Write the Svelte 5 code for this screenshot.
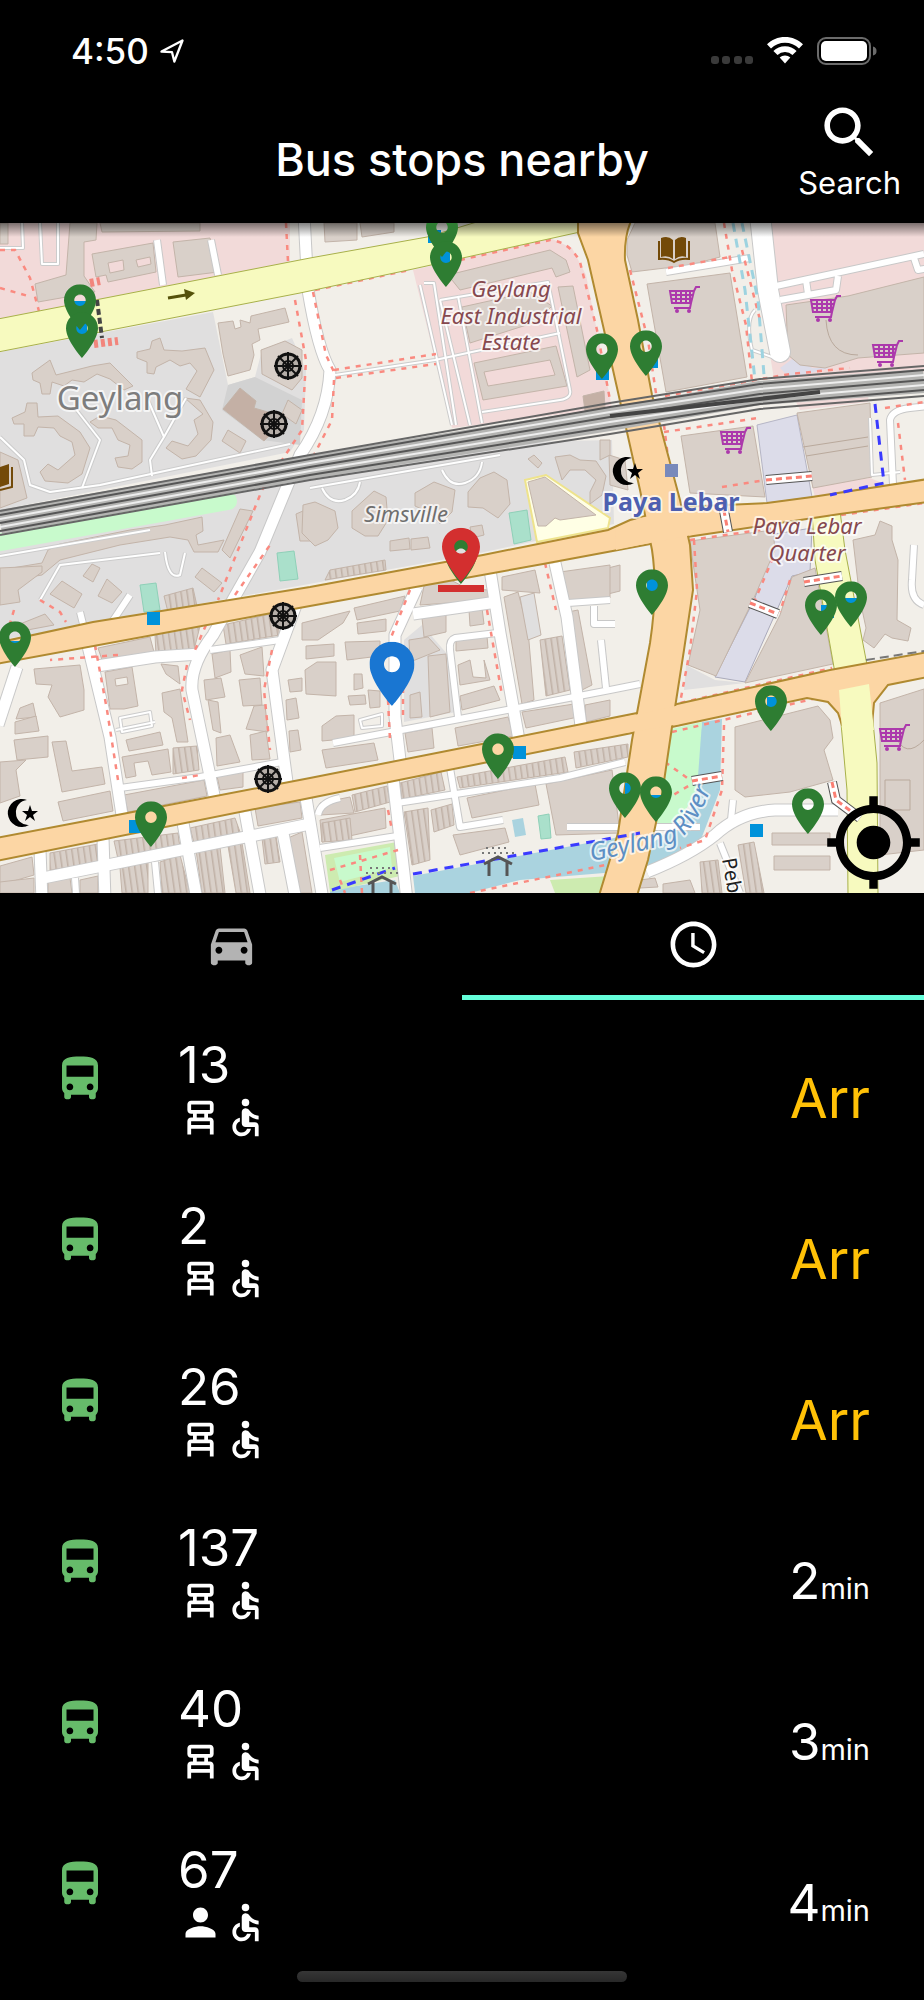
<script lang="ts">
  type Load = "seats" | "standing";

  interface Arrival {
    service: string;
    minutes: number;
    load: Load;
  }

  interface Pin {
    x: number;
    y: number;
    kind: "stop" | "selected" | "here";
  }

  const arrivals: Arrival[] = [
    { service: "13", minutes: 0, load: "seats" },
    { service: "2", minutes: 0, load: "seats" },
    { service: "26", minutes: 0, load: "seats" },
    { service: "137", minutes: 2, load: "seats" },
    { service: "40", minutes: 3, load: "seats" },
    { service: "67", minutes: 4, load: "standing" }
  ];

  // map canvas, in map units
  const MAP_W = 924;
  const MAP_H = 670;
  const MAP_TOP = 223;

  // x, y is the tip of the pin
  const pins: Pin[] = [
    { x: 442, y: 257, kind: "stop" },
    { x: 446, y: 287, kind: "stop" },
    { x: 80, y: 330, kind: "stop" },
    { x: 82, y: 358, kind: "stop" },
    { x: 602, y: 379, kind: "stop" },
    { x: 646, y: 376, kind: "stop" },
    { x: 652, y: 615, kind: "stop" },
    { x: 821, y: 635, kind: "stop" },
    { x: 851, y: 627, kind: "stop" },
    { x: 15, y: 667, kind: "stop" },
    { x: 771, y: 731, kind: "stop" },
    { x: 498, y: 779, kind: "stop" },
    { x: 625, y: 818, kind: "stop" },
    { x: 656, y: 822, kind: "stop" },
    { x: 808, y: 834, kind: "stop" },
    { x: 151, y: 847, kind: "stop" },
    { x: 461, y: 584, kind: "stop" },
    { x: 461, y: 582, kind: "selected" },
    { x: 392, y: 706, kind: "here" }
  ];

  const busSquares = [
    [428, 230], [437, 251], [74, 301], [74, 322], [596, 367], [645, 355],
    [147, 612], [129, 820], [513, 746], [750, 824], [9, 641], [647, 579],
    [821, 605], [845, 598], [767, 697], [625, 783], [650, 795]
  ];

  const buildings = [
    // north west
    "0,223 8,223 8,244 0,244",
    "70,223 97,223 96,240 84,242 84,276 95,292 38,302 35,284 66,275",
    "100,223 200,223 200,231 102,232",
    "92,254 153,243 156,272 108,282 106,275 96,277",
    "173,242 210,238 218,272 178,277",
    "324,223 357,223 357,240 325,242",
    "360,223 394,223 394,232 362,237",
    "32,373 50,360 56,375 92,366 110,363 133,386 124,390 110,379 97,374 84,382 72,380 64,386 52,382 50,394 42,394 40,383 33,380",
    "137,352 150,349 152,341 160,338 164,350 182,351 205,348 214,370 200,397 186,389 197,371 190,363 180,366 170,360 156,367 154,374 147,373 147,362 137,358",
    "12,418 25,412 27,403 37,403 38,417 58,416 80,432 90,448 82,474 68,483 45,481 40,472 48,464 58,470 75,455 72,442 60,436 54,428 38,427 34,436 24,436 24,424 14,424",
    "90,422 100,416 116,420 142,440 142,462 132,469 118,467 115,458 128,456 130,445 118,440 112,428 98,428",
    "185,398 200,400 213,422 211,440 196,456 182,459 166,448 172,441 188,446 198,434 194,420 203,414",
    "228,430 246,441 240,453 222,441",
    "218,323 233,321 235,329 241,327 240,320 250,323 251,316 285,308 289,322 258,329 260,340 252,344 254,355 250,370 228,376 223,354",
    "261,350 285,341 302,350 302,378 292,390 262,374",
    "288,400 302,410 296,424 282,414",
    "0,452 18,460 27,498 0,508",
    // estates along the railway
    "48,550 60,544 130,530 165,525 202,517 203,531 196,535 198,545 224,540 218,552 194,552 188,540 170,537 120,545 60,560 42,575 0,582 0,570 42,563",
    "240,509 253,511 230,558 222,550",
    "0,568 42,566 42,572 18,590 20,602 0,605",
    "92,564 100,568 93,582 83,576",
    "62,581 82,594 74,608 50,594",
    "107,579 122,592 112,603 98,596",
    "202,568 222,583 214,592 195,577",
    "20,624 45,614 54,625 22,631",
    "296,514 310,508 310,541 300,541",
    "303,505 315,502 335,511 338,528 328,540 315,546 302,533",
    "352,511 374,491 386,497 388,520 378,536 365,536 352,528",
    "415,493 434,482 455,490 452,512 440,524 428,512 415,506",
    "468,492 480,478 494,472 507,480 510,504 498,518 483,508 468,507",
    "390,541 409,538 410,549 390,551",
    "411,539 428,537 430,548 411,550",
    "470,527 482,525 484,535 472,538",
    "528,459 534,455 542,463 538,468",
    "555,457 570,455 580,460 596,461 606,476 602,495 590,504 590,492 596,480 585,470 570,470 562,480",
    "528,482 545,477 596,515 560,520 555,518 546,526 538,526",
    // industrial estate
    "448,275 550,250 566,260 570,272 556,277 552,268 460,290",
    "462,307 530,292 552,306 536,322 470,343",
    "474,363 556,346 567,386 483,400",
    "558,287 573,286 590,370 577,377",
    // east of the main road
    "635,223 715,223 720,257 690,265 632,272 627,255 627,240",
    "647,284 730,273 747,377 666,392",
    "786,305 848,296 924,277 924,353 858,358 825,368 800,365 788,355",
    "681,436 753,426 765,497 690,493",
    "797,413 870,403 872,477 813,488",
    "690,541 773,530 775,550 753,600 716,676 688,665 700,610 694,570",
    "792,577 815,568 833,664 745,683 780,615",
    "853,540 875,535 880,521 892,526 892,540 898,560 897,620 911,628 908,641 892,638 885,634 874,648 863,640 866,628 860,600",
    "735,727 818,706 830,720 833,738 824,750 833,780 790,792 745,797 735,790",
    "880,703 924,689 924,850 880,855",
    "609,455 625,460 628,490 610,485",
    "610,455 600,460 600,440 610,440",
    "600,570 620,565 620,591 600,596",
    // blocks between the avenues
    "98,648 150,637 154,652 102,660",
    "34,669 80,665 84,690 84,710 60,717 48,697 52,685 36,684",
    "20,708 33,703 36,717 16,719",
    "15,722 36,716 39,731 15,734",
    "14,740 48,736 48,757 17,760",
    "52,742 66,741 72,771 102,767 105,784 62,792",
    "0,762 26,760 16,770 20,796 0,803",
    "58,802 110,791 113,811 63,821",
    "105,672 132,667 138,706 124,709 110,709",
    "126,740 160,732 163,745 129,751",
    "122,757 168,749 171,772 152,775 148,761 134,763 136,776 126,778",
    "124,795 204,780 207,796 128,812",
    "161,664 178,666 180,684 166,674",
    "162,693 180,689 184,716 188,742 177,742 172,718 164,712",
    "212,654 230,650 231,672 215,678",
    "204,680 221,678 225,697 206,700",
    "208,700 218,702 221,733 213,730",
    "216,738 230,735 240,762 217,766",
    "240,655 262,647 264,676 245,674",
    "239,680 260,678 262,705 243,706",
    "254,706 265,705 268,732 246,729",
    "250,735 266,731 270,759 252,760",
    "217,776 243,770 243,787 220,790",
    "286,700 296,698 299,718 287,720",
    "289,731 298,730 301,750 290,752",
    "288,680 302,678 302,691 290,692",
    "302,623 350,611 343,623 318,640 302,640",
    "354,608 405,596 400,611 357,620",
    "357,623 386,619 386,631 358,634",
    "345,642 380,641 380,656 347,660",
    "306,646 334,644 334,656 306,659",
    "305,670 317,662 336,662 336,696 306,694",
    "322,726 336,716 354,715 354,738 322,741",
    "354,674 362,674 363,688 354,690",
    "348,696 365,695 366,704 350,705",
    "368,690 380,691 380,707 370,708",
    "322,750 374,743 378,760 326,768",
    "424,586 445,577 468,589 490,590 490,600 420,605",
    "422,618 446,615 446,632 424,637",
    "409,640 428,637 440,650 410,662",
    "410,695 420,692 422,717 410,718",
    "428,656 446,654 450,712 430,717",
    "469,610 482,608 484,624 470,626",
    "456,640 487,636 488,648 456,651",
    "458,665 470,660 473,677 486,678 484,660 490,680 460,685",
    "460,696 494,686 500,700 462,710",
    "405,733 432,728 434,748 408,752",
    "455,728 508,717 514,736 458,746",
    "502,577 535,570 540,593 502,590",
    "504,597 518,592 528,630 534,700 522,704",
    "560,572 610,565 610,598 564,602",
    "568,612 578,610 592,685 582,690",
    "522,712 574,704 578,717 526,728",
    "585,705 610,700 610,716 586,722",
    // south of the lower avenue
    "0,866 32,857 34,875 0,885",
    "0,882 34,878 34,893 0,893",
    "48,882 70,878 72,893 48,893",
    "80,880 98,876 98,893 80,893",
    "255,808 300,802 302,818 258,826",
    "320,803 350,797 354,813 320,815",
    "320,820 385,808 386,828 322,842",
    "288,838 302,832 312,893 298,893",
    "467,798 535,784 539,805 472,818",
    "546,784 612,770 620,833 556,835",
    "453,835 505,828 509,842 460,855",
    "772,833 830,833 830,845 772,845",
    "774,856 830,856 830,870 774,870",
    "640,880 655,878 658,887 640,888",
    "663,884 690,880 695,893 663,893"
  ];

  // shophouse rows, drawn with party walls
  const terraces = [
    "164,596 193,588 197,606 168,612",
    "155,634 200,626 194,650 156,656",
    "223,625 275,613 280,635 226,644",
    "173,748 197,746 199,770 173,774",
    "330,570 385,560 386,570 325,580",
    "540,640 562,636 570,690 546,696",
    "190,828 235,818 240,832 194,843",
    "114,841 178,833 180,848 118,859",
    "50,853 98,844 98,863 50,870",
    "196,850 220,847 225,893 202,893",
    "228,846 242,843 250,893 236,893",
    "262,838 276,836 280,862 265,864",
    "120,868 148,862 148,893 122,893",
    "160,862 180,855 190,893 162,893",
    "352,795 387,786 390,802 355,812",
    "322,823 350,818 352,840 322,842",
    "400,783 441,772 445,790 402,799",
    "404,812 428,808 430,860 412,865",
    "431,810 452,804 454,825 434,832",
    "457,777 565,757 568,772 460,788",
    "574,752 628,744 628,757 576,768",
    "738,845 754,842 764,893 746,893",
    "700,862 718,860 722,893 702,893"
  ];

  const majorStreets = [
    "M304 215 L308 290 Q318 350 330 370 Q328 415 300 455 L260 552 L213 635 Q190 665 192 690 L215 800",
    "M17 667 L-2 725",
    "M87 642 L110 737 L122 815",
    "M97 666 L155 657 L200 654",
    "M296 605 L272 670 L287 782",
    "M417 587 L395 635 L395 717 L400 760",
    "M490 570 L500 633 L519 740",
    "M555 563 L567 617 L581 726",
    "M40 850 L42 900 M103 838 L105 900 M183 823 L197 900 M245 812 L261 900 M282 828 L296 900",
    "M393 778 L407 900 M306 798 L323 900",
    "M43 878 L310 824",
    "M647 872 Q690 855 715 835 Q740 812 775 810 L838 810",
    "M413 614 L497 602"
  ];

  const minorStreets = [
    "M210 650 L280 640",
    "M120 788 L200 777 L282 762",
    "M333 743 L507 710 L610 690 L640 684",
    "M497 633 L455 638 Q449 640 450 650 L458 717",
    "M450 768 L460 827 L503 820",
    "M397 803 L560 778 L625 762",
    "M320 848 L397 836",
    "M318 815 Q320 802 340 798",
    "M80 612 L84 628 M130 595 L112 622",
    "M155 862 L158 893 M75 878 L76 893",
    "M568 603 L610 600 M594 606 L594 624 L615 624",
    "M601 640 L606 688",
    "M567 827 L700 827",
    "M720 843 L740 893 M733 800 L731 820",
    "M666 272 L750 258",
    "M776 286 L924 254 M780 300 L836 290 L838 276 M806 280 L808 294",
    "M914 258 L918 270 L930 268",
    "M157 240 L163 285 M211 240 L218 275",
    "M893 485 L890 420 Q892 410 910 408 L930 406",
    "M914 545 L912 580 Q910 600 924 605"
  ];

  const paths = [
    "M40 223 L42 264 L58 264 L58 223 M22 223 L23 248 L0 248",
    "M424 283 L434 283 L456 425 M420 285 L452 425 M440 300 L470 425 M458 296 L482 423",
    "M335 375 L435 360 L560 333 M440 300 L548 282 L570 390 Q572 398 560 400 L482 412",
    "M75 408 L100 440 L82 488 M148 400 L164 437 L150 460 L152 476 M164 437 L186 398",
    "M0 437 L24 460 L30 485 L50 492 L100 485 L290 444",
    "M310 488 L500 455 M322 488 Q330 505 345 500 Q358 495 360 482 M442 470 Q450 488 465 483 Q480 478 482 462",
    "M0 556 L150 530 M40 600 L60 565 L160 553 M165 552 Q168 580 180 575 L185 553",
    "M155 722 L116 730 M120 718 L150 712 L152 726 L122 732 Z",
    "M755 310 Q745 320 752 350 L775 358",
    "M870 418 L872 475 L900 472",
    "M360 720 L382 714 L382 726 L362 728 Z"
  ];

  const footways = [
    "M0 250 L15 250 L30 278 L40 315",
    "M0 288 L28 296",
    "M286 223 L288 262 M295 300 L306 360 L302 430 L262 490 L218 600",
    "M313 292 L326 355 L334 372 M334 380 L332 420 L314 455",
    "M334 370 L436 354 M336 378 L436 364",
    "M315 290 L410 270 M460 260 L550 240 Q570 242 580 262 L597 330 L610 400",
    "M630 270 L648 340 L657 400 M665 396 L790 374 L850 368",
    "M724 223 L732 270 L746 325 L752 382 M742 250 L760 320",
    "M668 268 L730 257",
    "M664 425 L672 490 M664 432 L758 418",
    "M722 487 L765 480",
    "M690 540 L775 528 M841 515 L924 503",
    "M694 540 L697 590 L690 650 L680 703 L832 668",
    "M672 732 L830 695",
    "M773 558 L755 600 M790 580 L780 612",
    "M724 725 L722 790 L705 840 L680 848",
    "M665 762 L690 780 M665 800 L690 785",
    "M118 655 L50 660",
    "M95 645 L107 710 L118 780",
    "M40 600 L60 612 L66 622 M14 610 L8 630",
    "M206 625 L195 650 M187 665 L182 690 L190 720",
    "M272 650 L264 690 L270 750",
    "M410 590 L390 640 M403 655 L403 720 M388 700 L390 740",
    "M487 610 L502 695",
    "M545 563 L556 610",
    "M182 778 L200 775 M250 809 L310 797",
    "M388 810 L392 830 M330 870 L398 850 M340 880 L345 893 M360 855 L362 893",
    "M470 893 L620 862",
    "M235 595 L270 545",
    "M898 423 L905 480 M885 408 L924 402"
  ];

  const footbridges =
    "M750 603 L778 614 M804 582 L842 576 M722 500 L728 532 M832 782 L836 800 L860 818 M692 781 L722 776 M766 480 L812 476";

  const carts = [[670, 287], [811, 296], [873, 341], [721, 428], [880, 725]];
  const wheels = [[288, 366], [274, 424], [283, 616], [268, 779]];
  const mosques = [[612, 457], [7, 799]];

  const tracks = [515, 519, 523, 527, 531];

  const pinNames = { stop: "Bus stop", selected: "Selected bus stop", here: "Your position" };

  let tab = $state("arrivals");
</script>

{#snippet icon(name: string)}
  <svg class="icon" viewBox="0 0 24 24" aria-hidden="true">
    {#if name === "bus"}
      <path d="M4 16c0 .88.39 1.67 1 2.22V20c0 .55.45 1 1 1h1c.55 0 1-.45 1-1v-1h8v1c0 .55.45 1 1 1h1c.55 0 1-.45 1-1v-1.78c.61-.55 1-1.34 1-2.22V6c0-3.5-3.58-4-8-4s-8 .5-8 4v10zm3.5 1c-.83 0-1.5-.67-1.5-1.5S6.67 14 7.5 14s1.5.67 1.5 1.5S8.33 17 7.5 17zm9 0c-.83 0-1.5-.67-1.5-1.5s.67-1.5 1.5-1.5 1.5.67 1.5 1.5-.67 1.5-1.5 1.5zm1.5-6H6V6h12v5z" />
    {:else if name === "car"}
      <path d="M18.92 6.01C18.72 5.42 18.16 5 17.5 5h-11c-.66 0-1.21.42-1.42 1.01L3 12v8c0 .55.45 1 1 1h1c.55 0 1-.45 1-1v-1h12v1c0 .55.45 1 1 1h1c.55 0 1-.45 1-1v-8l-2.08-5.99zM6.5 16c-.83 0-1.5-.67-1.5-1.5S5.67 13 6.5 13s1.5.67 1.5 1.5S7.33 16 6.5 16zm11 0c-.83 0-1.5-.67-1.5-1.5s.67-1.5 1.5-1.5 1.5.67 1.5 1.5-.67 1.5-1.5 1.5zM5 11l1.5-4.5h11L19 11H5z" />
    {:else if name === "clock"}
      <path d="M11.99 2C6.47 2 2 6.48 2 12s4.47 10 9.99 10C17.52 22 22 17.52 22 12S17.52 2 11.99 2zM12 20c-4.42 0-8-3.58-8-8s3.58-8 8-8 8 3.58 8 8-3.58 8-8 8zm.5-13H11v6l5.25 3.15.75-1.23-4.5-2.67z" />
    {:else if name === "search"}
      <path d="M15.5 14h-.79l-.28-.27C15.41 12.59 16 11.11 16 9.5 16 5.91 13.09 3 9.5 3S3 5.91 3 9.5 5.91 16 9.5 16c1.61 0 3.09-.59 4.23-1.57l.27.28v.79l5 4.99L20.49 19l-4.99-5zm-6 0C7.01 14 5 11.99 5 9.5S7.01 5 9.5 5 14 7.01 14 9.5 11.99 14 9.5 14z" />
    {:else if name === "seats"}
      <path d="M17 10c1.1 0 2-.9 2-2V5c0-1.1-.9-2-2-2H7c-1.1 0-2 .9-2 2v3c0 1.1.9 2 2 2h1v2H7c-1.1 0-2 .9-2 2v7h2v-3h10v3h2v-7c0-1.1-.9-2-2-2h-1v-2h1zM7 8V5h10v3H7zm3 2h4v2h-4v-2zm7 6H7v-2h10v2z" />
    {:else if name === "standing"}
      <path d="M12 12c2.21 0 4-1.79 4-4s-1.79-4-4-4-4 1.79-4 4 1.79 4 4 4zm0 2c-2.67 0-8 1.34-8 4v2h16v-2c0-2.66-5.33-4-8-4z" />
    {:else if name === "wheelchair"}
      <circle cx="12" cy="4" r="2" />
      <path d="M19 13v-2c-1.54.02-3.09-.75-4.07-1.83l-1.29-1.43c-.17-.19-.38-.34-.61-.45-.01 0-.01-.01-.02-.01H13c-.35-.2-.75-.3-1.19-.26C10.76 7.11 10 8.04 10 9.09V15c0 1.1.9 2 2 2h5v5h2v-5.5c0-1.1-.9-2-2-2h-3v-3.45c1.29 1.07 3.25 1.94 5 1.95zm-6.17 5c-.41 1.16-1.52 2-2.83 2-1.66 0-3-1.34-3-3 0-1.31.84-2.41 2-2.83V12.1c-2.28.46-4 2.48-4 4.9 0 2.76 2.24 5 5 5 2.42 0 4.44-1.72 4.9-4h-2.07z" />
    {:else if name === "locate"}
      <path d="M12 8c-2.21 0-4 1.79-4 4s1.79 4 4 4 4-1.79 4-4-1.79-4-4-4zm8.94 3c-.46-4.17-3.77-7.48-7.94-7.94V1h-2v2.06C6.83 3.52 3.52 6.83 3.06 11H1v2h2.06c.46 4.17 3.77 7.48 7.94 7.94V23h2v-2.06c4.17-.46 7.48-3.77 7.94-7.94H23v-2h-2.06zM12 19c-3.87 0-7-3.13-7-7s3.13-7 7-7 7 3.13 7 7-3.13 7-7 7z" />
    {/if}
  </svg>
{/snippet}

<div class="app">
  <div class="status-bar">
    <div class="status-left">
      <span class="time">4:50</span>
      <svg class="arrow" viewBox="0 0 24 24" aria-hidden="true">
        <path d="M21 3 L3 12.500 L12 13 L14 21 Z" />
      </svg>
    </div>
    <div class="status-right">
      <svg class="signal" viewBox="0 0 42 8" aria-hidden="true">
        <rect x="0" y="0" width="8" height="8" rx="3" />
        <rect x="11" y="0" width="8" height="8" rx="3" />
        <rect x="23" y="0" width="8" height="8" rx="3" />
        <rect x="34" y="0" width="8" height="8" rx="3" />
      </svg>
      <svg class="wifi" viewBox="0 0 36 27" aria-hidden="true">
        <path d="M18 0C25 0 31.500 2.700 36 7.300L32 11.400A20 20 0 0 0 4 11.400L0 7.300C4.500 2.700 11 0 18 0Z" />
        <path d="M18 9.300C22.500 9.300 26.500 11 29.600 14L25.500 18.100A10.800 10.800 0 0 0 10.500 18.100L6.400 14C9.500 11 13.500 9.300 18 9.300Z" />
        <path d="M18 18.400C20 18.400 21.900 19.200 23.300 20.500L18 26.500L12.700 20.500C14.100 19.200 16 18.400 18 18.400Z" />
      </svg>
      <svg class="battery" viewBox="0 0 60 28" aria-hidden="true">
        <rect class="shell" x="1" y="1" width="52" height="26" rx="8" />
        <rect x="4" y="4" width="46" height="20" rx="5" />
        <path class="nub" d="M56 9.500C59 10.500 59.500 12 59.500 14S59 17.500 56 18.500Z" />
      </svg>
    </div>
  </div>

  <header>
    <h1>Bus stops nearby</h1>
    <button class="search" type="button">
      {@render icon("search")}
      <span>Search</span>
    </button>
  </header>

  <section class="map" aria-label="Map">
    <svg class="tiles" viewBox="0 {MAP_TOP} {MAP_W} {MAP_H}">
      <defs>
        <pattern id="walls" width="6" height="6" patternUnits="userSpaceOnUse" patternTransform="rotate(-8)">
          <rect width="6" height="6" fill="#d9d0c9" />
          <rect width="1.500" height="6" fill="#c0b1a6" />
        </pattern>
        <linearGradient id="shade" x1="0" y1="0" x2="0" y2="1">
          <stop offset="0" stop-color="#000" stop-opacity="0.5" />
          <stop offset="1" stop-color="#000" stop-opacity="0" />
        </linearGradient>
        <path id="river-name" d="M591 861 Q640 852 676 842 Q702 826 722 755" />
        <g id="cart">
          <path d="M0 4 H24 L21 16 H2 Z M24 4 L26 0 H30 M21 16 L20 21 H4 M1 8 H23 M2 12 H22 M6 4 V16 M11 4 V16 M16 4 V16 M20 4 V16" fill="none" stroke="#ac39ac" stroke-width="2" />
          <circle cx="7" cy="24" r="2" fill="#ac39ac" />
          <circle cx="19" cy="24" r="2" fill="#ac39ac" />
        </g>
        <g id="wheel" stroke="#111" fill="none">
          <circle r="12" stroke-width="3" />
          <circle r="5" stroke-width="2" />
          <path d="M-14 0H14M0-14V14M-10-10L10 10M10-10L-10 10" stroke-width="2" />
        </g>
        <g id="mosque">
          <path d="M20 1 A14 14 0 1 0 22 26 A12 12 0 0 1 9 14 A12 12 0 0 1 20 1 Z" />
          <path d="M23 6 L25 12 L31 12 L26 16 L28 22 L23 18 L18 22 L20 16 L15 12 L21 12 Z" />
        </g>
        <g id="shelter" fill="none" stroke="#555" stroke-width="3">
          <path d="M-14 7 L0 0 L14 7 M-9 5 V19 M9 5 V19" />
          <path d="M-16 -4 H16 M-12 -9 H12" stroke="#777" stroke-width="2" stroke-dasharray="2 4" />
        </g>
      </defs>

      <rect x="0" y="223" width="924" height="670" fill="#f2efe9" />

      <!-- land use -->
      <g fill="#f2dad9">
        <polygon points="0,223 290,223 290,262 0,320" />
        <polygon points="413,270 550,238 572,248 586,275 612,408 452,428" />
        <polygon points="764,223 924,223 924,372 775,385 770,355 785,355" />
        <polygon points="812,486 870,478 885,484 815,497" />
        <polygon points="790,390 870,375 868,402 800,410" />
      </g>
      <g fill="#e0dfdf">
        <polygon points="0,352 213,312 228,385 255,377 262,350 292,338 306,370 304,430 290,452 0,510" />
        <polygon points="0,530 310,478 520,442 612,440 614,524 480,553 0,640" />
        <polygon points="404,640 422,625 448,655 456,712 404,722" />
        <polygon points="686,665 715,680 745,683 684,690" />
      </g>
      <polygon points="228,385 255,377 302,400 300,445 262,440 222,410" fill="#d2d2d2" />
      <path d="M-5 543 L228 501" stroke="#c8facc" stroke-width="18" stroke-linecap="round" />
      <polygon points="525,480 546,475 610,518 608,528 537,542" fill="#ffffe5" stroke="#eee38c" stroke-width="2" />
      <g fill="#dcdce9">
        <polygon points="757,425 797,415 812,497 767,503" stroke="#b5b5c5" />
        <polygon points="780,368 795,357 812,368 830,368 790,378" />
        <polygon points="775,534 812,528 810,572 792,576 745,682 715,677 755,598" stroke="#aaaabb" />
      </g>
      <g fill="#aae0cb" stroke="#8fd0b8">
        <polygon points="509,513 527,510 531,540 514,544" />
        <polygon points="140,585 156,583 160,610 144,612" />
        <polygon points="277,553 294,551 298,579 280,581" />
        <polygon points="538,816 549,814 551,838 541,839" />
      </g>

      <!-- water and parks -->
      <polygon points="413,876 630,835 650,845 690,815 702,722 722,719 720,790 700,842 640,870 520,880 470,893 415,893" fill="#aad3df" />
      <polygon points="512,820 523,818 526,835 515,837" fill="#aad3df" />
      <polygon points="330,890 395,880 400,893 330,893" fill="#aad3df" />
      <polygon points="671,729 702,722 697,790 680,820 655,830" fill="#c8facc" />
      <polygon points="325,855 397,842 400,876 330,892" fill="#cdebb0" />
      <polygon points="334,858 390,847 392,868 340,882" fill="#c8facc" />
      <polygon points="550,880 610,876 600,893 555,893" fill="#cdebb0" />

      <g fill="#d9d0c9" stroke="#c3b4a9" stroke-width="1">
        {#each buildings as points}
          <polygon {points} />
        {/each}
      </g>
      <g fill="url(#walls)" stroke="#c3b4a9" stroke-width="1">
        {#each terraces as points}
          <polygon {points} />
        {/each}
      </g>
      <g stroke="#c3b4a9">
        <polygon points="108,263 123,260 124,270 110,273" fill="#f2dad9" />
        <polygon points="136,260 150,257 151,264 138,267" fill="#f2dad9" />
        <polygon points="484,372 550,360 555,375 488,386" fill="#f2dad9" />
        <polygon points="115,679 127,677 128,684 116,686" fill="#f2efe9" />
        <polygon points="520,597 534,593 541,635 528,640" fill="#e0dfdf" />
        <polygon points="240,388 256,401 254,408 268,412 275,430 264,441 223,409" fill="#c4b0a5" />
        <polygon points="583,396 604,391 605,408 585,411" fill="#c4b0a5" />
        <path d="M826 320 Q828 355 858 355 M803 447 L868 437 M806 456 L868 446 M885 780 H910 V810 H885 Z M895 735 Q905 760 924 740" fill="none" stroke="#b9a99c" />
      </g>

      <!-- streets: casing first, then fill -->
      <g fill="none" stroke-linejoin="round">
        {#each minorStreets as d}<path {d} stroke="#c8c8c8" stroke-width="8" />{/each}
        {#each majorStreets as d}<path {d} stroke="#c8c8c8" stroke-width="13" />{/each}
        <path d="M760 215 L768 290 L780 352" stroke="#c8c8c8" stroke-width="22" stroke-linecap="round" />
        {#each paths as d}<path {d} stroke="#ccc" stroke-width="4" />{/each}
        {#each paths as d}<path {d} stroke="#fff" stroke-width="2" />{/each}
        {#each minorStreets as d}<path {d} stroke="#fff" stroke-width="6" />{/each}
        {#each majorStreets as d}<path {d} stroke="#fff" stroke-width="11" />{/each}
        <path d="M760 215 L768 290 L780 352" stroke="#fff" stroke-width="20" stroke-linecap="round" />
      </g>

      <g fill="none" stroke="#fa8a80" stroke-width="2.500" stroke-dasharray="5 6">
        {#each footways as d}<path {d} />{/each}
      </g>
      <path d="M733 223 L745 290 L755 380 M742 223 L758 300 L764 375" fill="none" stroke="#9dd3e0" stroke-width="3" stroke-dasharray="9 7" />

      <g fill="#f7fabf" stroke="#a8b04a" stroke-width="1">
        <polygon points="-2,319 310,258 427,237 480,221 582,221 580,232 413,269 300,293 -2,352" />
        <polygon points="812,511 840,511 845,550 868,670 877,763 878,895 848,895 847,790 838,690 815,560" />
      </g>

      <!-- arterial roads -->
      <g fill="#fcd6a4" stroke="#b08a30" stroke-width="2">
        <polygon points="-4,838 117,815 310,778 487,743 637,713 677,704 830,670 928,652 928,677 888,685 874,703 872,725 842,725 838,713 828,702 807,698 672,727 632,733 310,798 -4,861" />
        <polygon points="-4,643 93,622 310,587 483,555 608,530 630,520 680,507 767,503 812,497 928,479 928,502 840,514 687,537 645,545 543,564 310,606 -4,664" />
        <path d="M578 219 L578 233 L588 260 L604 330 L622 410 L640 490 L652 550 Q658 590 650 643 L632 740 L618 833 L598 899 H636 L648 860 L662 795 L672 727 L684 650 L693 590 L690 545 L680 500 L664 440 L652 395 L638 320 L625 260 Q624 235 632 219 Z" />
      </g>
      <g fill="#fcd6a4">
        <polygon points="615,529 640,518 690,507 692,535 640,545 616,550" />
        <polygon points="625,717 680,705 680,724 625,733" />
      </g>
      <polygon points="839,690 869,684 874,730 842,730" fill="#f7fabf" />

      <!-- railway -->
      <path d="M0 522 L310 467 L610 419 L760 393 L924 381" fill="none" stroke="#b4b4b2" stroke-width="24" />
      <g fill="none" stroke-width="2">
        {#each tracks as y, i}
          <path d="M0 {y} L310 {y - 56} L610 {y - 108 + i} L760 {y - 131 + i} L924 {y - 145 + i}" stroke={i % 2 ? "#eee" : "#555"} />
        {/each}
        <path d="M0 511 L310 455 L610 403 L760 379 L924 366 M0 535 L310 480 L610 434 L760 409 L924 396" stroke="#666" />
        <path d="M610 416 L820 392" stroke="#444" stroke-width="4" />
      </g>

      <g fill="none" stroke="#3a3aff" stroke-width="3" stroke-dasharray="9 7">
        <path d="M413 874 L640 833" />
        <path d="M875 404 L884 483 L830 495" />
        <path d="M332 890 L395 868" />
      </g>

      <!-- footbridges -->
      <g fill="none">
        <path d={footbridges} stroke="#555" stroke-width="10" />
        <path d={footbridges} stroke="#fff" stroke-width="8" />
        <path d={footbridges} stroke="#fa7f73" stroke-width="3" stroke-dasharray="6 4" />
        <path d="M97 300 L102 338" stroke="#444" stroke-width="4" stroke-dasharray="6 3" />
        <path d="M94 344 L118 341 M90 283 L100 281" stroke="#f2857c" stroke-width="8" stroke-dasharray="4 3" />
        <path d="M866 660 L924 651" stroke="#777" stroke-width="2" stroke-dasharray="9 5" />
      </g>

      <path d="M168 298 L186 295" stroke="#55510a" stroke-width="3" />
      <path d="M184 289 L195 293 L186 300 Z" fill="#55510a" />

      {#each busSquares as [x, y]}
        <rect {x} {y} width="13" height="13" fill="#0092da" />
      {/each}
      <rect x="665" y="464" width="13" height="13" fill="#7889bb" />

      {#each carts as [x, y]}<use href="#cart" {x} {y} />{/each}
      {#each wheels as [x, y]}<circle cx={x} cy={y} r="12" fill="#b5aea8" /><use href="#wheel" {x} {y} />{/each}
      {#each mosques as [x, y]}<use href="#mosque" {x} {y} />{/each}
      <use href="#shelter" x="382" y="877" />
      <use href="#shelter" x="498" y="857" />
      <g fill="#734a08">
        <path d="M661 238 Q668 235 673 240 V259 Q668 255 661 257 Z M675 240 Q680 235 686 238 V257 Q680 255 675 259 Z" />
        <path d="M659 241 V259 Q668 258 674 262 Q680 258 689 259 V241" fill="none" stroke="#734a08" stroke-width="2" />
        <path d="M0 467 L9 464 V484 L0 487 Z" />
        <path d="M12 467 V487 L0 490" fill="none" stroke="#734a08" stroke-width="2" />
      </g>

      <g class="labels">
        <text class="suburb" x="120" y="410">Geylang</text>
        <text class="area estate" x="511" y="297">Geylang</text>
        <text class="area estate" x="511" y="324">East Industrial</text>
        <text class="area estate" x="511" y="350">Estate</text>
        <text class="area" x="406" y="522">Simsville</text>
        <text class="station" x="671" y="511">Paya Lebar</text>
        <text class="area estate" x="807" y="534">Paya Lebar</text>
        <text class="area estate" x="807" y="561">Quarter</text>
        <text class="river"><textPath href="#river-name">Geylang River</textPath></text>
        <text class="street" transform="translate(722 859) rotate(80)">Peb</text>
      </g>

      <rect x="0" y="223" width="924" height="14" fill="url(#shade)" />
      <rect x="438" y="585" width="46" height="7" fill="#d32f2f" />
    </svg>

    {#each pins as pin}
      <button
        class="pin {pin.kind}"
        type="button"
        aria-label={pinNames[pin.kind]}
        style="left: {(pin.x / MAP_W) * 100}%; top: {((pin.y - MAP_TOP) / MAP_H) * 100}%"
      >
        <svg viewBox="5 2 14 20" aria-hidden="true">
          <path d="M12 2C8.130 2 5 5.130 5 9c0 5.250 7 13 7 13s7-7.750 7-13c0-3.870-3.130-7-7-7zm0 9.500c-1.380 0-2.500-1.120-2.500-2.500s1.120-2.500 2.500-2.500 2.500 1.120 2.500 2.500-1.120 2.500-2.500 2.500z" />
        </svg>
      </button>
    {/each}

    <button class="locate" type="button" aria-label="Go to my location">
      {@render icon("locate")}
    </button>
  </section>

  <div class="tabs" role="tablist">
    <button
      type="button"
      role="tab"
      aria-label="Vehicles"
      aria-selected={tab === "vehicles"}
      class:active={tab === "vehicles"}
      onclick={() => (tab = "vehicles")}
    >
      {@render icon("car")}
    </button>
    <button
      type="button"
      role="tab"
      aria-label="Arrivals"
      aria-selected={tab === "arrivals"}
      class:active={tab === "arrivals"}
      onclick={() => (tab = "arrivals")}
    >
      {@render icon("clock")}
    </button>
  </div>

  <ul class="arrivals">
    {#each arrivals as arrival}
      <li>
        <span class="bus">{@render icon("bus")}</span>
        <div class="service">
          <span class="number">{arrival.service}</span>
          <span class="features">
            {@render icon(arrival.load)}
            {@render icon("wheelchair")}
          </span>
        </div>
        {#if arrival.minutes === 0}
          <span class="eta now">Arr</span>
        {:else}
          <span class="eta">{arrival.minutes}<small>min</small></span>
        {/if}
      </li>
    {/each}
  </ul>

  <div class="home-indicator"></div>
</div>

<style>
  :global(body) {
    background: #000;
  }

  .app {
    position: relative;
    min-height: 100vh;
    background: #000;
    color: #fff;
    font-family: Inter, "Liberation Sans", sans-serif;
  }

  button {
    padding: 0;
    border: 0;
    background: none;
    color: inherit;
    font: inherit;
    cursor: pointer;
  }

  svg {
    display: block;
  }

  .icon {
    width: 100%;
    height: 100%;
    fill: currentColor;
  }

  .status-bar {
    display: flex;
    justify-content: space-between;
    align-items: center;
    height: 99px;
    padding: 2px 47px 0 71px;
    box-sizing: border-box;
  }

  .status-left,
  .status-right {
    display: flex;
    align-items: center;
  }

  .status-left {
    gap: 9px;
  }

  .time {
    font-size: 35px;
    font-weight: 500;
    line-height: 40px;
  }

  .arrow {
    width: 28px;
    height: 28px;
    fill: none;
    stroke: #fff;
    stroke-width: 2;
    stroke-linejoin: round;
  }

  .status-right {
    gap: 14px;
    fill: #fff;
  }

  .signal {
    width: 42px;
    height: 8px;
    margin-top: 18px;
    fill: #3a3a3a;
  }

  .wifi {
    width: 36px;
    height: 27px;
  }

  .battery {
    width: 60px;
    height: 28px;
  }

  .battery .shell {
    fill: none;
    stroke: #6b6b6b;
    stroke-width: 2;
  }

  .battery .nub {
    fill: #6b6b6b;
  }

  header {
    display: grid;
    grid-template-columns: 1fr auto 1fr;
    align-items: start;
    padding: 0 23px 21px;
  }

  h1 {
    grid-column: 2;
    margin: 35px 0 0;
    font-size: 45px;
    font-weight: 500;
    line-height: 52px;
  }

  .search {
    justify-self: end;
    display: flex;
    flex-direction: column;
    align-items: center;
    font-size: 31px;
    line-height: 36px;
  }

  .search .icon {
    width: 67px;
    height: 67px;
  }

  .search span {
    margin-top: -1px;
    padding-bottom: 1px;
  }

  .map {
    position: relative;
    overflow: hidden;
    aspect-ratio: 924 / 670;
    background: #f2efe9;
  }

  .tiles {
    width: 100%;
    height: 100%;
  }

  .labels {
    font-family: "Noto Sans", "Open Sans", sans-serif;
    text-anchor: middle;
    paint-order: stroke;
    stroke: rgba(255, 255, 255, 0.7);
    stroke-width: 4px;
    stroke-linejoin: round;
  }

  .suburb {
    font-size: 33px;
    fill: #7d7d7d;
  }

  .area {
    font-size: 22px;
    font-style: italic;
    fill: #6f6f6f;
  }

  .estate {
    fill: #86494f;
  }

  .station {
    font-size: 25px;
    font-weight: 700;
    fill: #4d5fb0;
  }

  .river {
    font-size: 25px;
    font-style: italic;
    text-anchor: start;
    fill: #5d8fc4;
  }

  .street {
    font-size: 20px;
    text-anchor: start;
    fill: #222;
  }

  .pin {
    position: absolute;
    width: 32px;
    transform: translate(-50%, -100%);
    color: #2e7d32;
  }

  .pin svg {
    width: 100%;
    fill: currentColor;
  }

  .pin.selected {
    width: 38px;
    color: #d32f2f;
  }

  .pin.here {
    width: 45px;
    color: #1976d2;
  }

  .locate {
    position: absolute;
    right: 0;
    bottom: 0;
    width: 101px;
    height: 101px;
    color: #000;
  }

  .tabs {
    display: grid;
    grid-template-columns: 1fr 1fr;
  }

  .tabs button {
    display: flex;
    justify-content: center;
    padding: 24px 0 23px;
    border-bottom: 5px solid transparent;
    color: #b3b3b3;
  }

  .tabs button.active {
    border-bottom-color: #64ffda;
    color: #fff;
  }

  .tabs .icon {
    width: 55px;
    height: 55px;
  }

  .arrivals {
    margin: 0;
    padding: 0;
    list-style: none;
  }

  .arrivals li {
    display: grid;
    grid-template-columns: 125px 1fr auto;
    align-items: start;
    min-height: 161px;
    padding: 35px 54px 0 53px;
    box-sizing: border-box;
  }

  .bus {
    width: 54px;
    height: 54px;
    margin-top: 17px;
    color: #66bb6a;
  }

  .service {
    display: flex;
    flex-direction: column;
  }

  .number {
    font-size: 51px;
    line-height: 60px;
  }

  .features {
    display: flex;
  }

  .features .icon {
    width: 45px;
    height: 45px;
  }

  .eta {
    margin-top: 33px;
    font-size: 51px;
    line-height: 60px;
  }

  .eta.now {
    font-size: 55px;
    color: #ffc107;
  }

  .eta small {
    font-size: 29px;
  }

  .home-indicator {
    position: absolute;
    left: 50%;
    bottom: 18px;
    width: 330px;
    height: 11px;
    border-radius: 6px;
    background: linear-gradient(#363636, #282828);
    transform: translateX(-50%);
  }
</style>
